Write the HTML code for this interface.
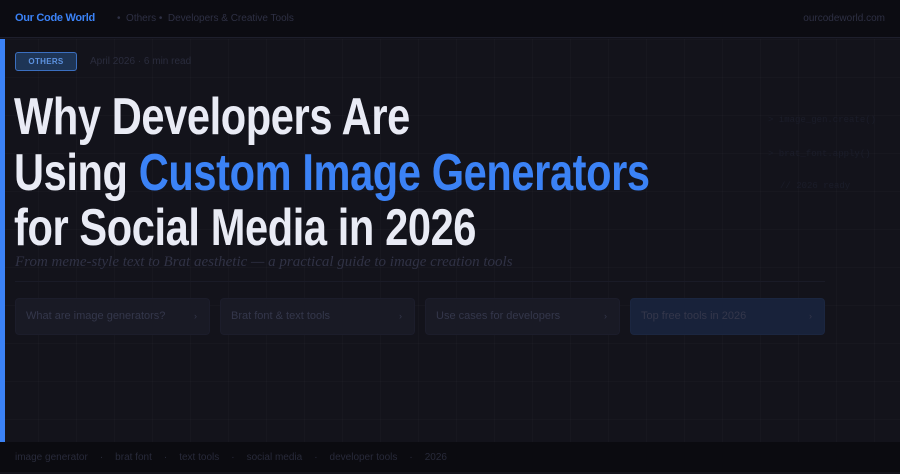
<!DOCTYPE html>
<html><head><meta charset="utf-8"><style>
*{margin:0;padding:0;box-sizing:border-box}
body{width:900px;height:472px;overflow:hidden;background:#13131b;font-family:"Liberation Sans",sans-serif;position:relative}
.hdr{position:absolute;left:0;top:0;width:900px;height:38px;background:#0c0c12;border-bottom:1px solid #1e1f2c}
.logo{position:absolute;left:15px;top:12px;font-size:11px;font-weight:bold;color:#3b82f6;letter-spacing:-0.3px}
.crumb{position:absolute;left:117px;top:13px;font-size:10px;color:#2e3044}
.site{position:absolute;right:15px;top:13px;font-size:10px;color:#2e3044}
.main{position:absolute;left:0;top:39px;width:900px;height:403px;background-color:#13131b;
background-image:linear-gradient(rgba(255,255,255,0.014) 1px,transparent 1px),linear-gradient(90deg,rgba(255,255,255,0.014) 1px,transparent 1px);background-size:38px 38px;background-position:0 0}
.bar{position:absolute;left:0;top:39px;width:5px;height:403px;background:#3b82f6}
.badge{position:absolute;left:15px;top:52px;width:62px;height:19px;border:1px solid #3b6fc0;border-radius:3px;background:#1e3556;color:#5d92e0;font-size:8px;font-weight:bold;text-align:center;line-height:17px;letter-spacing:0.3px}
.meta{position:absolute;left:90px;top:56px;font-size:10px;color:#2a2c3d}
.title{position:absolute;left:14px;top:90px;font-weight:bold;font-size:52px;line-height:55.5px;color:#e9ebf5;white-space:nowrap}
.title div{transform:scaleX(0.80);transform-origin:left;letter-spacing:-0.5px}
.blue{color:#3b82f6}
.sub{position:absolute;left:15px;top:254px;font-family:"Liberation Serif",serif;font-style:italic;font-size:15px;color:#303245}
.div{position:absolute;left:15px;top:281px;width:810px;height:1px;background:#1a1b27}
.card{position:absolute;top:298px;width:195px;height:37px;border-radius:4px;background:#191a25;border:1px solid #1c1d2b;color:#34374b;font-size:11px;line-height:35px;padding-left:10px}
.card span{position:absolute;right:12px;top:0;font-size:9px}
.card.hl{background:#18223a;border-color:#1b2640}
.code{position:absolute;left:768px;font-family:"Liberation Mono",monospace;font-size:9px;color:#1b1d2a}
.ftr{position:absolute;left:0;top:442px;width:900px;height:30px;background:#0b0b10;color:#282a3a;font-size:10px;line-height:32px;padding-left:15px}
.ftr b{font-weight:normal;margin:0 12px}
</style></head><body>
<div class="hdr"><div class="logo">Our Code World</div><div class="crumb">•&nbsp; Others •&nbsp; Developers &amp; Creative Tools</div><div class="site">ourcodeworld.com</div></div>
<div class="main"></div>
<div class="bar"></div>
<div class="code" style="top:115px">&gt; image_gen.create()</div>
<div class="code" style="top:149px">&gt; brat_font.apply()</div>
<div class="code" style="top:181px;left:780px">// 2026 ready</div>
<div class="badge">OTHERS</div>
<div class="meta">April 2026 · 6 min read</div>
<div class="title"><div>Why Developers Are</div><div>Using <span class="blue">Custom Image Generators</span></div><div>for Social Media in 2026</div></div>
<div class="sub">From meme-style text to Brat aesthetic — a practical guide to image creation tools</div>
<div class="div"></div>
<div class="card" style="left:15px">What are image generators?<span>›</span></div>
<div class="card" style="left:220px">Brat font &amp; text tools<span>›</span></div>
<div class="card" style="left:425px">Use cases for developers<span>›</span></div>
<div class="card hl" style="left:630px">Top free tools in 2026<span>›</span></div>
<div class="ftr">image generator<b>·</b>brat font<b>·</b>text tools<b>·</b>social media<b>·</b>developer tools<b>·</b>2026</div>
</body></html>
